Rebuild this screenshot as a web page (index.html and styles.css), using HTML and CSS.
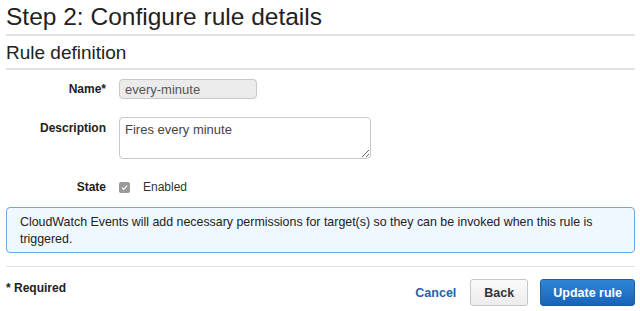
FILE: index.html
```html
<!DOCTYPE html>
<html lang="en">
<head>
   <meta charset="UTF-8">
   <meta name="viewport" content="width=device-width, initial-scale=1.0">
   <title>Configure rule details</title>
   <link rel="stylesheet" href="styles.css">
</head>
<body>

<h1 class="title">Step 2: Configure rule details</h1>
<h2 class="subtitle">Rule definition</h2>

<div class="form">
   <div class="row">
      <label class="label">Name*</label>
      <input class="input" type="text" value="every-minute" disabled>
   </div>
   <div class="row row-top">
      <label class="label">Description</label>
      <textarea class="textarea">Fires every minute</textarea>
   </div>
   <div class="row">
      <label class="label">State</label>
      <span class="check">
         <svg width="9" height="9" viewBox="0 0 9 9"><path d="M2 4.6 L3.8 6.4 L7 2.6" fill="none" stroke="#fff" stroke-width="1.3"/></svg>
      </span>
      <span class="check-text">Enabled</span>
   </div>
</div>

<div class="info">
   CloudWatch Events will add necessary permissions for target(s) so they can be invoked when this rule is triggered.
</div>

<div class="footer">
   <span class="required">* Required</span>
   <div class="actions">
      <a class="cancel" href="#">Cancel</a>
      <button class="btn">Back</button>
      <button class="btn btn-primary">Update rule</button>
   </div>
</div>

</body>
</html>
```

FILE: styles.css
```css
*,
::before,
::after {
    padding: 0;
    margin: 0;
    box-sizing: border-box;
}

html,
body {
    background: #fff;
    font-family: "Liberation Sans", Arial, sans-serif;
    color: #222;
}

body {
    padding: 0 5px 0 6px;
    font-size: 12px;
}

.title {
    font-size: 24.5px;
    font-weight: normal;
    line-height: 28px;
    padding-top: 3px;
    padding-bottom: 3px;
    border-bottom: 2px solid #e3e3e3;
}

.subtitle {
    font-size: 19px;
    font-weight: normal;
    line-height: 22px;
    padding-top: 6px;
    padding-bottom: 4px;
    border-bottom: 2px solid #e3e3e3;
}

/* form */
.form {
    display: flex;
    flex-direction: column;
    padding-top: 9px;
}

.row {
    display: flex;
    align-items: center;
    min-height: 20px;
}

.row + .row {
    margin-top: 18px;
}

.row:last-child {
    margin-top: 18px;
}

.row-top {
    align-items: flex-start;
}

.label {
    width: 100px;
    text-align: right;
    font-weight: bold;
    color: #222;
    margin-right: 13px;
}

.row-top .label {
    padding-top: 4px;
}

.input {
    width: 138px;
    height: 20px;
    padding: 0 5px;
    font: 13px "Liberation Sans", Arial, sans-serif;
    color: #555;
    background: #ebebeb;
    border: 1px solid #c8c8c8;
    border-radius: 4px;
}

.textarea {
    width: 252px;
    height: 42px;
    padding: 4px 5px;
    font: 13px "Liberation Sans", Arial, sans-serif;
    color: #444;
    background: #fff;
    border: 1px solid #c8c8c8;
    border-radius: 4px;
}

.check {
    display: flex;
    align-items: center;
    justify-content: center;
    width: 11px;
    height: 11px;
    background: #9a9a9a;
    border-radius: 2px;
}

.check-text {
    margin-left: 13px;
    color: #333;
}

/* info */
.info {
    margin-top: 10px;
    padding: 6px 13px 4px;
    font-size: 12.4px;
    line-height: 17px;
    color: #222;
    background: #eff7ff;
    border: 1px solid #6fa6dc;
    border-radius: 4px;
}

/* footer */
.footer {
    display: flex;
    justify-content: space-between;
    align-items: flex-start;
    margin-top: 13px;
    padding-top: 12px;
    border-top: 1px solid #e0e0e0;
}

.required {
    font-weight: bold;
    color: #222;
    padding-top: 2px;
}

.actions {
    display: flex;
    align-items: center;
    gap: 12px;
}

.cancel {
    color: #2662ad;
    font-weight: bold;
    font-size: 12.5px;
    text-decoration: none;
    margin-right: 2px;
}

.btn {
    height: 27px;
    padding: 0 13px;
    font: bold 12.5px "Liberation Sans", Arial, sans-serif;
    color: #333;
    background: linear-gradient(#fafafa, #ececec);
    border: 1px solid #c6c6c6;
    border-radius: 3px;
}

.btn-primary {
    padding: 0 12px;
    color: #fff;
    background: linear-gradient(#2f86d8, #1863b8);
    border-color: #1b5ea8;
}
```
